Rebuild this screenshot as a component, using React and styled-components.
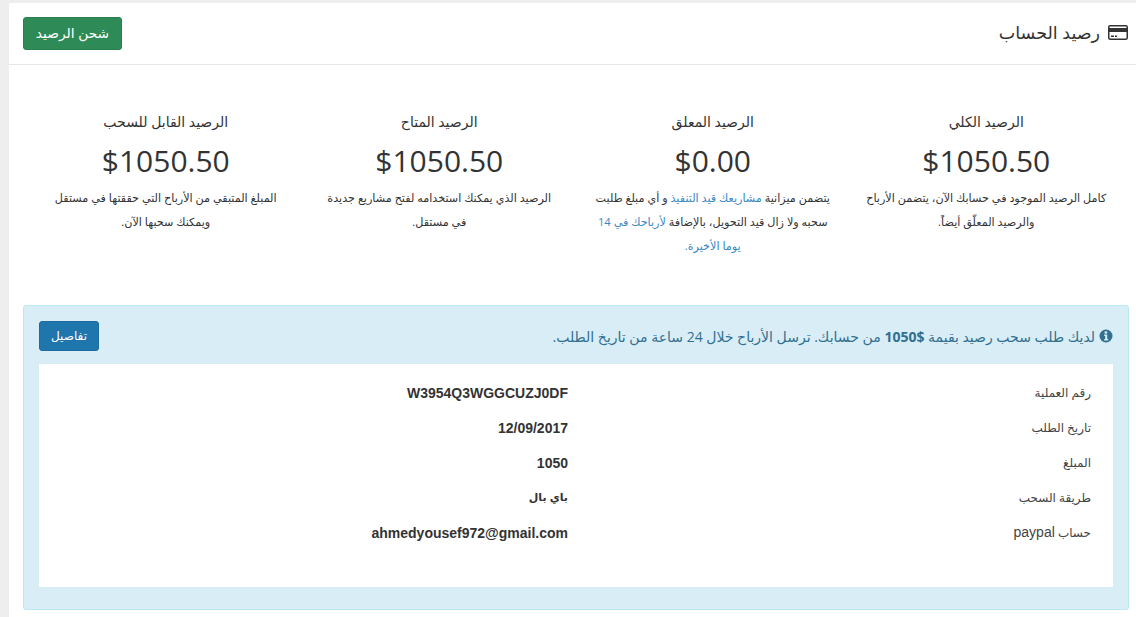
import React from "react"
import styled, { createGlobalStyle } from "styled-components"

const Global = createGlobalStyle`
  html, body { margin: 0; padding: 0; background: #eeeeee; }
  body { font-family: "Open Sans", "DejaVu Sans", sans-serif; color: #333; overflow: hidden; }
`

const Page = styled.div`
  height: 617px;
  padding: 3px 0 0 9px;
  box-sizing: border-box;
`

const Panel = styled.main`
  background: #fff;
  height: 614px;
`

const Header = styled.header`
  display: flex;
  justify-content: space-between;
  align-items: center;
  height: 61px;
  padding: 0 8px 0 14px;
  border-bottom: 1px solid #e7e7e7;
`

const Title = styled.h1`
  display: flex;
  align-items: center;
  gap: 8px;
  margin: 0 0 3px;
  font-size: 17.5px;
  font-weight: 400;
  color: #333;
`

const Button = styled.button`
  font-family: inherit;
  color: #fff;
  background: ${p => p.$bg};
  border: 1px solid ${p => p.$border};
  border-radius: 3px;
  font-size: ${p => p.$size};
  height: ${p => p.$h};
  width: ${p => p.$w};
  padding: 0 0 2px;
`

const Stats = styled.section`
  display: grid;
  grid-template-columns: repeat(4, 273.5px);
  padding: 47px 13px 0 0;
  height: 193px;
`

const Stat = styled.div`
  padding: 0 15px;
  text-align: center;
`

const StatLabel = styled.div`
  font-size: 14px;
  line-height: 20px;
`

const StatValue = styled.div`
  font-size: 30px;
  line-height: 40px;
  margin: 9px 0 5px;
  color: #333;
`

const StatText = styled.p`
  margin: 0;
  font-size: 11.2px;
  line-height: 24px;
`

const Link = styled.span`
  color: #3b88c3;
`

const Alert = styled.section`
  margin: 0 7px 0 14px;
  height: 305px;
  box-sizing: border-box;
  background: #d9edf7;
  border: 1px solid #bce8f1;
  border-radius: 3px;
  padding: 0 15px;
`

const AlertBar = styled.div`
  display: flex;
  justify-content: space-between;
  align-items: center;
  height: 58px;
  padding-top: 2px;
  box-sizing: border-box;
`

const AlertText = styled.div`
  display: flex;
  align-items: center;
  gap: 4px;
  font-size: 14px;
  color: #31708f;
`

const Details = styled.div`
  background: #fff;
  height: 223px;
  padding: 11px 22px 0;
  box-sizing: border-box;
`

const Row = styled.div`
  display: grid;
  grid-template-columns: 523px 1fr;
  height: 35px;
  align-items: center;
`

const Label = styled.div`
  font-size: 12px;
  color: #444;
`

const Latin = styled.span`
  font-family: "Liberation Sans", sans-serif;
  font-size: 14px;
`

const Value = styled.div`
  font-family: "Liberation Sans", "DejaVu Sans", sans-serif;
  font-size: ${p => (p.$arabic ? "11px" : "14px")};
  font-weight: 700;
  color: #333;
`

const CardIcon = () => (
  <svg width="20" height="15" viewBox="0 0 20 15">
    <rect x="0.75" y="0.75" width="18.5" height="13.5" rx="1.5" fill="#fff" stroke="#333" strokeWidth="1.5" />
    <rect x="1" y="3" width="18" height="4" fill="#333" />
    <rect x="3" y="10.5" width="3" height="1.5" fill="#333" />
    <rect x="7" y="10.5" width="2" height="1.5" fill="#333" />
  </svg>
)

const InfoIcon = () => (
  <svg width="14" height="14" viewBox="0 0 14 14">
    <circle cx="7" cy="7" r="6.5" fill="#31708f" />
    <rect x="5.6" y="2.4" width="2.6" height="2.2" fill="#d9edf7" />
    <path d="M5.2 5.6h3v4.4h1v1.4H5.2V10h1V7h-1z" fill="#d9edf7" />
  </svg>
)

const stats = [
  { label: "الرصيد الكلي", value: "$1050.50", text: "كامل الرصيد الموجود في حسابك الآن، يتضمن الأرباح والرصيد المعلّق أيضاً." },
  {
    label: "الرصيد المعلق",
    value: "$0.00",
    text: (
      <>
        يتضمن ميزانية <Link>مشاريعك قيد التنفيذ</Link> و أي مبلغ طلبت سحبه ولا زال قيد التحويل، بالإضافة <Link>لأرباحك في 14 يوما الأخيرة.</Link>
      </>
    ),
  },
  {
    label: "الرصيد المتاح",
    value: "$1050.50",
    text: (
      <>
        الرصيد الذي يمكنك استخدامه لفتح مشاريع جديدة
        <br />
        في مستقل.
      </>
    ),
  },
  { label: "الرصيد القابل للسحب", value: "$1050.50", text: "المبلغ المتبقي من الأرباح التي حققتها في مستقل ويمكنك سحبها الآن." },
]

const rows = [
  { key: "رقم العملية", label: "رقم العملية", value: "W3954Q3WGGCUZJ0DF" },
  { key: "تاريخ الطلب", label: "تاريخ الطلب", value: "12/09/2017" },
  { key: "المبلغ", label: "المبلغ", value: "1050" },
  { key: "طريقة السحب", label: "طريقة السحب", value: "باي بال", arabic: true },
  { key: "حساب", label: <>حساب <Latin>paypal</Latin></>, value: "ahmedyousef972@gmail.com" },
]

export default function App() {
  return (
    <Page dir="rtl">
      <Global />
      <Panel>
        <Header>
          <Title><CardIcon /> رصيد الحساب</Title>
          <Button $bg="#2e8b57" $border="#29804f" $size="13.8px" $w="99px" $h="33px">شحن الرصيد</Button>
        </Header>
        <Stats>
          {stats.map(s => (
            <Stat key={s.label}>
              <StatLabel>{s.label}</StatLabel>
              <StatValue dir="ltr">{s.value}</StatValue>
              <StatText>{s.text}</StatText>
            </Stat>
          ))}
        </Stats>
        <Alert>
          <AlertBar>
            <AlertText>
              <InfoIcon />
              <span>لديك طلب سحب رصيد بقيمة <b>$1050</b> من حسابك. ترسل الأرباح خلال 24 ساعة من تاريخ الطلب.</span>
            </AlertText>
            <Button $bg="#1f76ad" $border="#1c6ca0" $size="12px" $w="60px" $h="30px">تفاصيل</Button>
          </AlertBar>
          <Details>
            {rows.map(r => (
              <Row key={r.key}>
                <Label>{r.label}</Label>
                <Value $arabic={r.arabic}>{r.value}</Value>
              </Row>
            ))}
          </Details>
        </Alert>
      </Panel>
    </Page>
  )
}
